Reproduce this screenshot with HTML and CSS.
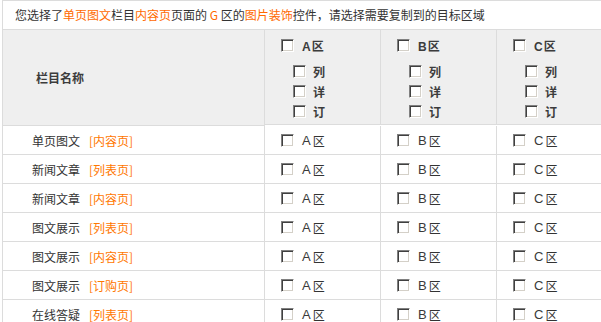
FILE: index.html
```html
<!DOCTYPE html>
<html lang="zh-CN">
<head>
<meta charset="utf-8">
<title>复制到目标区域</title>
<link rel="stylesheet" href="styles.css">
</head>
<body>
<div class="wrap">
  <div class="tip">您选择了<em>单页图文</em>栏目<em>内容页</em>页面的 <em>G</em> 区的<em>图片装饰</em>控件，请选择需要复制到的目标区域</div>
  <div class="grid">
    <div class="cell head name">栏目名称</div>
    <div class="cell head zone">
      <div class="top"><span class="cb"></span><b class="zl">A</b><b>区</b></div>
      <ul class="subs">
        <li><span class="cb"></span><b>列</b></li>
        <li><span class="cb"></span><b>详</b></li>
        <li><span class="cb"></span><b>订</b></li>
      </ul>
    </div>
    <div class="cell head zone">
      <div class="top"><span class="cb"></span><b class="zl">B</b><b>区</b></div>
      <ul class="subs">
        <li><span class="cb"></span><b>列</b></li>
        <li><span class="cb"></span><b>详</b></li>
        <li><span class="cb"></span><b>订</b></li>
      </ul>
    </div>
    <div class="cell head zone">
      <div class="top"><span class="cb"></span><b class="zl">C</b><b>区</b></div>
      <ul class="subs">
        <li><span class="cb"></span><b>列</b></li>
        <li><span class="cb"></span><b>详</b></li>
        <li><span class="cb"></span><b>订</b></li>
      </ul>
    </div>

    <div class="cell col">单页图文<a>[内容页]</a></div>
    <div class="cell pick"><span class="cb"></span><span class="zl">A</span>区</div>
    <div class="cell pick"><span class="cb"></span><span class="zl">B</span>区</div>
    <div class="cell pick"><span class="cb"></span><span class="zl">C</span>区</div>

    <div class="cell col">新闻文章<a>[列表页]</a></div>
    <div class="cell pick"><span class="cb"></span><span class="zl">A</span>区</div>
    <div class="cell pick"><span class="cb"></span><span class="zl">B</span>区</div>
    <div class="cell pick"><span class="cb"></span><span class="zl">C</span>区</div>

    <div class="cell col">新闻文章<a>[内容页]</a></div>
    <div class="cell pick"><span class="cb"></span><span class="zl">A</span>区</div>
    <div class="cell pick"><span class="cb"></span><span class="zl">B</span>区</div>
    <div class="cell pick"><span class="cb"></span><span class="zl">C</span>区</div>

    <div class="cell col">图文展示<a>[列表页]</a></div>
    <div class="cell pick"><span class="cb"></span><span class="zl">A</span>区</div>
    <div class="cell pick"><span class="cb"></span><span class="zl">B</span>区</div>
    <div class="cell pick"><span class="cb"></span><span class="zl">C</span>区</div>

    <div class="cell col">图文展示<a>[内容页]</a></div>
    <div class="cell pick"><span class="cb"></span><span class="zl">A</span>区</div>
    <div class="cell pick"><span class="cb"></span><span class="zl">B</span>区</div>
    <div class="cell pick"><span class="cb"></span><span class="zl">C</span>区</div>

    <div class="cell col">图文展示<a>[订购页]</a></div>
    <div class="cell pick"><span class="cb"></span><span class="zl">A</span>区</div>
    <div class="cell pick"><span class="cb"></span><span class="zl">B</span>区</div>
    <div class="cell pick"><span class="cb"></span><span class="zl">C</span>区</div>

    <div class="cell col">在线答疑<a>[列表页]</a></div>
    <div class="cell pick"><span class="cb"></span><span class="zl">A</span>区</div>
    <div class="cell pick"><span class="cb"></span><span class="zl">B</span>区</div>
    <div class="cell pick"><span class="cb"></span><span class="zl">C</span>区</div>
  </div>
</div>
</body>
</html>
```

FILE: styles.css
```css
html, body {
  margin: 0;
  padding: 0;
  background: #fff;
  overflow: hidden;
}
body {
  font-family: "Liberation Sans", "Noto Sans CJK SC", sans-serif;
  font-size: 12px;
  color: #333;
}
.wrap {
  margin-left: 2px;
  width: 610px;
}
.tip {
  height: 28px;
  line-height: 28px;
  border-top: 1px solid #dcdcdc;
  border-left: 1px solid #dcdcdc;
  border-bottom: 1px solid #dcdcdc;
  padding-left: 12px;
  white-space: nowrap;
  font-family: "Noto Sans CJK SC", sans-serif;
}
.tip em {
  font-style: normal;
  color: #ff6a00;
}
.grid {
  display: grid;
  grid-template-columns: 263px 116px 116px 116px;
}
.cell {
  border-right: 1px solid #dcdcdc;
  border-bottom: 1px solid #dcdcdc;
  display: flex;
  align-items: center;
  height: 28px;
  white-space: nowrap;
}
.cell.col,
.cell.name {
  border-left: 1px solid #dcdcdc;
}
.head {
  background: #efefef;
  height: 95px;
}
.name {
  padding-left: 33px;
  font-weight: bold;
  color: #3c3c3c;
  font-family: "Noto Sans CJK SC", sans-serif;
}
.zone {
  flex-direction: column;
  align-items: flex-start;
  justify-content: flex-start;
  padding: 9px 0 0 16px;
  box-sizing: border-box;
}
.zone b {
  color: #3c3c3c;
  font-family: "Noto Sans CJK SC", sans-serif;
}
.zone b.zl {
  font-family: "Liberation Sans", sans-serif;
  margin-left: 8px;
  margin-right: 1px;
  position: relative;
  top: 1px;
}
.top {
  display: flex;
  align-items: center;
  height: 13px;
}
.subs {
  list-style: none;
  margin: 13px 0 0 12px;
  padding: 0;
  display: flex;
  flex-direction: column;
  gap: 7px;
}
.subs li {
  display: flex;
  align-items: center;
  gap: 7px;
  height: 13px;
}
.cb {
  display: inline-block;
  width: 13px;
  height: 13px;
  box-sizing: border-box;
  background: #fff;
  border: 1px solid;
  border-color: #808080 #fff #fff #808080;
  box-shadow: inset 1px 1px 0 #404040, inset -1px -1px 0 #d4d0c8;
  flex: none;
}
.col {
  padding-left: 29px;
  font-family: "Noto Sans CJK SC", sans-serif;
  color: #333;
}
.col a {
  color: #ff7700;
  margin-left: 9px;
}
.pick {
  padding-left: 16px;
  font-family: "Noto Sans CJK SC", sans-serif;
  color: #333;
}
.pick .zl {
  font-family: "Liberation Sans", sans-serif;
  margin-left: 8px;
  margin-right: 2px;
  font-size: 13px;
  color: #3a3a3a;
}
```
